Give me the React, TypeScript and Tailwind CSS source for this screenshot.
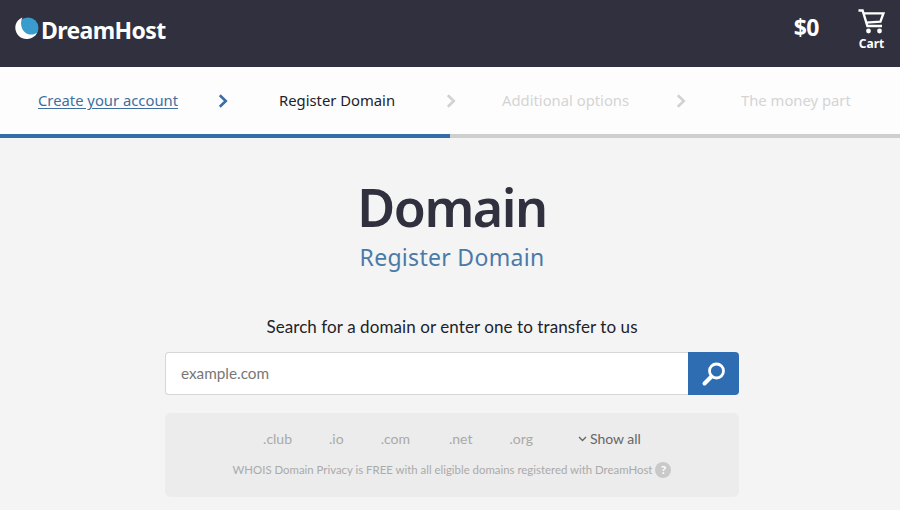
import React from "react";

const ubuntu = "font-['Noto_Sans','Open_Sans',sans-serif]";
const prox = "font-['Lato','Liberation_Sans',sans-serif]";

function Chevron({ color }: { color: string }) {
  return (
    <svg width="10" height="14" viewBox="0 0 10 14" fill="none" className="shrink-0">
      <path d="M1.8 1.2 L7.8 7 L1.8 12.8" stroke={color} strokeWidth="2.6" />
    </svg>
  );
}

function Logo() {
  return (
    <svg width="24" height="24" viewBox="0 0 24 24" className="shrink-0">
      <circle cx="13" cy="11" r="10.5" fill="#3a9ccd" />
      <path
        d="M7.5 0.4 C2.6 2.4 -0.2 6.8 0.4 12 C1.1 18.6 7.4 23 13.6 21.8 C17.6 21.1 21 18.4 22 15.4 C18.8 18 14.4 18.4 10.8 16 C6.2 13 4.6 6.2 7.5 0.4 Z"
        fill="#ffffff"
      />
    </svg>
  );
}

function Cart() {
  return (
    <svg width="27" height="25" viewBox="0 0 27 25" fill="none" stroke="#ffffff" strokeWidth="2.4">
      <path d="M0.5 1.5 H4.6 L9.4 17 H24" />
      <path d="M5.4 4.4 H25.4 L22.4 12.6 L7.8 13.6" />
      <circle cx="10.5" cy="22" r="2.4" fill="#ffffff" stroke="none" />
      <circle cx="21.5" cy="22" r="2.4" fill="#ffffff" stroke="none" />
    </svg>
  );
}

function Search() {
  return (
    <svg width="26" height="26" viewBox="0 0 26 26" fill="none">
      <circle cx="15.5" cy="10" r="7" stroke="#ffffff" strokeWidth="2.8" />
      <path d="M10.5 15.5 L3.5 22.5" stroke="#ffffff" strokeWidth="4" strokeLinecap="round" />
    </svg>
  );
}

export default function App() {
  return (
    <div className={`w-[900px] h-[510px] overflow-hidden bg-[#f4f4f4] ${ubuntu}`}>
      <header className="h-[67px] bg-[#30303e] flex items-center pl-[15px] pr-[15px] pb-[9px] text-white">
        <div className="flex items-center">
          <Logo />
          <span className="ml-[2px] text-[23px] font-bold leading-none tracking-[-0.6px] mt-[2px]">DreamHost</span>
        </div>
        <span className="ml-auto text-[23px] font-bold leading-none tracking-[-0.5px] pb-[3px]">$0</span>
        <div className="ml-[39px] flex flex-col items-center w-[27px]">
          <Cart />
          <span className="text-[12px] font-bold leading-none mt-[4px]">Cart</span>
        </div>
      </header>

      <nav className="h-[67px] bg-[#fdfdfd] flex items-center pl-[38px] text-[14.8px] leading-none">
        <a className="text-[#3f6f9f] underline underline-offset-2 w-[140px] whitespace-nowrap">Create your account</a>
        <span className="ml-[40px]"><Chevron color="#3a6ea5" /></span>
        <span className="ml-[51px] w-[115px] text-[#22222a] whitespace-nowrap">Register Domain</span>
        <span className="ml-[52px]"><Chevron color="#d2d2d2" /></span>
        <span className="ml-[46px] w-[128px] text-[#d4d4d4] whitespace-nowrap">Additional options</span>
        <span className="ml-[46px]"><Chevron color="#d2d2d2" /></span>
        <span className="ml-[55px] text-[#d4d4d4] whitespace-nowrap">The money part</span>
      </nav>

      <div className="h-[4px] flex bg-[#cfcfcf]">
        <div className="w-[450px] bg-[#316da8]" />
      </div>

      <main className="w-[574px] ml-[165px]">
        <h1 className="mt-[39px] text-center text-[52px] font-semibold leading-[60px] tracking-[-1.5px] text-[#30303e]">Domain</h1>
        <p className="mt-[5px] text-center text-[23px] leading-[30px] text-[#4a7aa8] tracking-[0.3px]">Register Domain</p>
        <p className={`mt-[43px] text-center text-[17px] leading-[24px] tracking-[0.08px] text-[#22222a] ${prox}`}>
          Search for a domain or enter one to transfer to us
        </p>
        <div className="mt-[13px] flex h-[43px]">
          <div className={`flex-1 bg-white border border-[#d6d6d6] border-r-0 rounded-l-[4px] flex items-center pl-[15px] text-[15.3px] text-[#777777] ${prox}`}>
            example.com
          </div>
          <button className="w-[51px] bg-[#2f6db3] rounded-r-[4px] flex items-center justify-center">
            <Search />
          </button>
        </div>
        <div className={`mt-[18px] h-[84px] bg-[#ececec] rounded-[6px] flex flex-col items-center pt-[16px] ${prox}`}>
          <div className="flex items-center text-[14px] leading-[20px] text-[#a9a9a9]">
            <span>.club</span>
            <span className="ml-[37px]">.io</span>
            <span className="ml-[37px]">.com</span>
            <span className="ml-[39px]">.net</span>
            <span className="ml-[37px]">.org</span>
            <span className="ml-[45px] text-[#666666] flex items-center">
              <svg width="9" height="6" viewBox="0 0 9 6" fill="none" className="mr-[3px]">
                <path d="M1 1 L4.5 4.5 L8 1" stroke="#666666" strokeWidth="1.4" />
              </svg>
              Show all
            </span>
          </div>
          <div className="mt-[13px] flex items-center text-[11.4px] leading-[16px] text-[#aaaaaa]">
            <span>WHOIS Domain Privacy is FREE with all eligible domains registered with DreamHost</span>
            <span className="ml-[3px] w-[16px] h-[16px] rounded-full bg-[#c9c9c9] text-white font-bold text-[12px] leading-none flex items-center justify-center">?</span>
          </div>
        </div>
      </main>
    </div>
  );
}
